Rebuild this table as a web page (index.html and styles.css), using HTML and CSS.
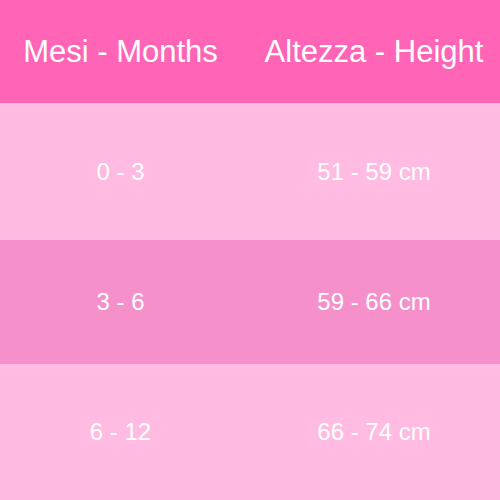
FILE: index.html
```html
<!DOCTYPE html>
<html>
<head>
<meta charset="utf-8">
<link rel="stylesheet" href="styles.css">
</head>
<body>
<div class="table">
  <div class="row head">
    <div class="cell">Mesi - Months</div>
    <div class="cell">Altezza - Height</div>
  </div>
  <div class="row light r1">
    <div class="cell">0 - 3</div>
    <div class="cell">51 - 59 cm</div>
  </div>
  <div class="row mid r2">
    <div class="cell">3 - 6</div>
    <div class="cell">59 - 66 cm</div>
  </div>
  <div class="row light r3">
    <div class="cell">6 - 12</div>
    <div class="cell">66 - 74 cm</div>
  </div>
</div>
</body>
</html>
```
FILE: styles.css
```css
html, body {
  margin: 0;
  padding: 0;
}
body {
  width: 500px;
  height: 500px;
  font-family: "Liberation Sans", Arial, sans-serif;
  color: #ffffff;
}
.table {
  display: flex;
  flex-direction: column;
  width: 500px;
  height: 500px;
}
.row {
  display: grid;
  grid-template-columns: 241px 252px;
  column-gap: 7px;
  align-items: center;
  text-align: center;
}
.head {
  height: 103px;
  background: #ff64b6;
  font-size: 31px;
}
.light {
  background: #ffbbe1;
  font-size: 24px;
}
.mid {
  background: #f590cb;
  font-size: 24px;
}
.r1 { height: 137px; }
.r2 { height: 124px; }
.r3 { height: 136px; }
.cell {
  line-height: 1;
  white-space: nowrap;
}
```
